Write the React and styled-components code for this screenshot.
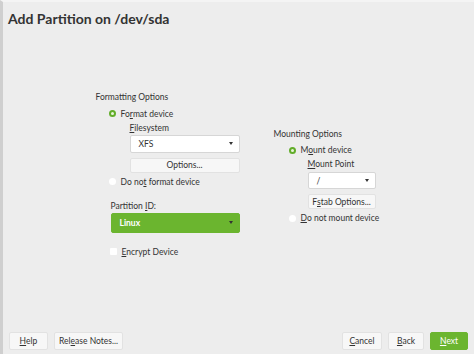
import React from "react";
import styled, { createGlobalStyle } from "styled-components";

const Global = createGlobalStyle`
  html, body { margin: 0; padding: 0; }
  body { background: #ededed; font-family: Lato, "Noto Sans", sans-serif; color: #333; }
`;

const Page = styled.div`
  width: 474px;
  height: 354px;
  box-sizing: border-box;
  border-left: 3px solid #cfcfcf;
  border-top: 2px solid #f4f4f4;
  background: #ededed;
  display: flex;
  flex-direction: column;
`;

const Title = styled.h1`
  margin: 0;
  padding: 8px 0 0 5px;
  height: 22px;
  font-size: 14px;
  line-height: 18px;
  font-weight: 700;
  color: #333;
`;

const Main = styled.div`
  flex: 1;
  display: flex;
  justify-content: center;
  align-items: center;
  gap: 34px;
  padding: 0 6px 12px 0;
  white-space: nowrap;
`;

const Column = styled.div`
  display: flex;
  flex-direction: column;
  width: ${(p) => p.$w}px;
  margin-top: ${(p) => p.$mt || 0}px;
`;

const GroupTitle = styled.div`
  font-size: 8.5px;
  line-height: 12px;
  height: 12px;
`;

const Row = styled.div`
  display: flex;
  align-items: center;
  gap: 5px;
  font-size: 8.5px;
  line-height: 12px;
  height: 12px;
  margin-left: ${(p) => p.$indent || 0}px;
  margin-top: ${(p) => p.$mt || 0}px;
`;

const Radio = styled.span`
  width: 7px;
  height: 7px;
  border-radius: 50%;
  box-sizing: border-box;
  background: ${(p) => (p.$on ? "#e8f3dc" : "#fff")};
  border: ${(p) => (p.$on ? "2px solid #62ad2a" : "none")};
  flex: none;
`;

const Check = styled.span`
  width: 7px;
  height: 7px;
  background: #fff;
  border-radius: 1px;
  flex: none;
`;

const Sub = styled.div`
  display: flex;
  flex-direction: column;
  margin-left: ${(p) => p.$indent}px;
  margin-top: ${(p) => p.$mt || 0}px;
  width: ${(p) => p.$w}px;
`;

const FieldLabel = styled.div`
  font-size: 8.5px;
  line-height: 12px;
  height: 12px;
`;

const Select = styled.div`
  margin-top: ${(p) => p.$mt || 0}px;
  height: ${(p) => p.$h}px;
  box-sizing: border-box;
  display: flex;
  align-items: center;
  justify-content: space-between;
  padding: 0 6px 0 8px;
  font-size: 8.5px;
  border-radius: 2px;
  background: ${(p) => (p.$green ? "#6bb52f" : "#fff")};
  color: ${(p) => (p.$green ? "#fff" : "#333")};
  border: 1px solid ${(p) => (p.$green ? "#6bb52f" : "#d6d6d6")};
  font-weight: ${(p) => (p.$green ? 700 : 400)};
`;

const Caret = styled.span`
  width: 0;
  height: 0;
  border-left: 2.5px solid transparent;
  border-right: 2.5px solid transparent;
  border-top: 3px solid #333;
`;

const Button = styled.div`
  margin-top: ${(p) => p.$mt || 0}px;
  height: ${(p) => p.$h || 16}px;
  width: ${(p) => (p.$w ? p.$w + "px" : "auto")};
  box-sizing: border-box;
  display: flex;
  align-items: center;
  justify-content: center;
  font-size: 8.5px;
  border-radius: 2px;
  background: ${(p) => (p.$green ? "#6bb52f" : "#f7f7f7")};
  color: ${(p) => (p.$green ? "#fff" : "#333")};
  border: 1px solid ${(p) => (p.$green ? "#6bb52f" : "#e2e2e2")};
`;

const Footer = styled.div`
  display: flex;
  align-items: flex-end;
  padding: 0 6px 4px 6px;
  height: 26px;
  box-sizing: border-box;
  gap: 6px;
`;

const Spacer = styled.div`
  flex: 1;
`;

const U = styled.span`
  text-decoration: underline;
  text-underline-offset: 1px;
`;

export default function App() {
  return (
    <>
      <Global />
      <Page>
        <Title>Add Partition on /dev/sda</Title>
        <Main>
          <Column $w={144}>
            <GroupTitle>Formatting Options</GroupTitle>
            <Row $indent={13} $mt={5}>
              <Radio $on />
              <span>Fo<U>r</U>mat device</span>
            </Row>
            <Sub $indent={34} $w={110} $mt={2}>
              <FieldLabel><U>F</U>ilesystem</FieldLabel>
              <Select $h={18} $mt={1}>
                <span>XFS</span>
                <Caret />
              </Select>
              <Button $mt={5} $h={15}>Options...</Button>
            </Sub>
            <Row $indent={13} $mt={3}>
              <Radio />
              <span>Do no<U>t</U> format device</span>
            </Row>
            <Sub $indent={15} $w={129} $mt={12}>
              <FieldLabel>Partition <U>I</U>D:</FieldLabel>
              <Select $h={20} $mt={1} $green>
                <span>Linux</span>
                <Caret />
              </Select>
            </Sub>
            <Row $indent={14} $mt={13}>
              <Check />
              <span><U>E</U>ncrypt Device</span>
            </Row>
          </Column>
          <Column $w={102} $mt={4}>
            <GroupTitle>Mounting Options</GroupTitle>
            <Row $indent={15} $mt={4}>
              <Radio $on />
              <span>M<U>o</U>unt device</span>
            </Row>
            <Sub $indent={34} $w={68} $mt={2}>
              <FieldLabel><U>M</U>ount Point</FieldLabel>
              <Select $h={17} $mt={2}>
                <span>/</span>
                <Caret />
              </Select>
              <Button $mt={5} $h={15}>F<U>s</U>tab Options...</Button>
            </Sub>
            <Row $indent={15} $mt={3}>
              <Radio />
              <span><U>D</U>o not mount device</span>
            </Row>
          </Column>
        </Main>
        <Footer>
          <Button $w={39} $h={18}><U>H</U>elp</Button>
          <Button $w={69} $h={18}>Rel<U>e</U>ase Notes...</Button>
          <Spacer />
          <Button $w={40} $h={18}><U>C</U>ancel</Button>
          <Button $w={36} $h={18}><U>B</U>ack</Button>
          <Button $w={38} $h={18} $green><U>N</U>ext</Button>
        </Footer>
      </Page>
    </>
  );
}
